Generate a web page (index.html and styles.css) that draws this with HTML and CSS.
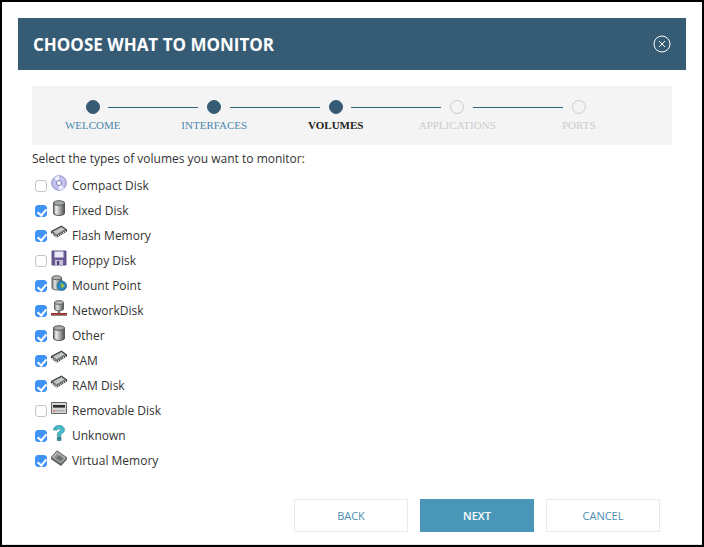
FILE: index.html
```html
<!DOCTYPE html>
<html lang="en">
<head>
<meta charset="utf-8">
<title>Choose what to monitor</title>
<link rel="stylesheet" href="styles.css">
</head>
<body>
<svg class="defs" width="0" height="0" aria-hidden="true">
  <defs>
    <linearGradient id="can" x1="0" x2="1" y1="0" y2="0"><stop offset="0" stop-color="#77797a"/><stop offset=".3" stop-color="#e2e3e3"/><stop offset=".65" stop-color="#9a9c9c"/><stop offset="1" stop-color="#4c4e4e"/></linearGradient>
    <symbol id="i-cd" viewBox="0 0 16 16"><circle cx="8" cy="8" r="7.300" fill="#c3c2ee" stroke="#8585c2" stroke-width=".9"/><path d="M8 8 3 2.800A7 7 0 0 1 8 1z" fill="#f0f0fd"/><path d="M8 8l5 5.200A7 7 0 0 1 8 15z" fill="#f0f0fd"/><circle cx="8" cy="8" r="2.500" fill="#fff" stroke="#6f6fb0" stroke-width=".9"/></symbol>
    <symbol id="i-can" viewBox="0 0 16 16"><path d="M2.500 3v10.300c0 1.300 2.500 2.200 5.500 2.200s5.500-.9 5.500-2.200V3z" fill="url(#can)" stroke="#4d4f4f" stroke-width=".9"/><ellipse cx="8" cy="3" rx="5.500" ry="2.300" fill="#a8aaaa" stroke="#4d4f4f" stroke-width=".9"/><path d="M5 6v7.500" stroke="#f2f2f2" stroke-width="1"/></symbol>
    <symbol id="i-chip" viewBox="0 0 16 16"><path d="M0 6.500 10.500 1 16 5l-10.500 6.500z" fill="#7d7f7f" stroke="#232525" stroke-width=".9"/><path d="M2.500 6.500l8-4.200 3 2.200-8 4.700z" fill="#c4c6c6"/><path d="M0 6.500V8l5.500 5L16 6.500V5L5.500 11.500z" fill="#303232"/><path d="M1 8.200l4.500 4L15.500 6" fill="none" stroke="#fff" stroke-width="1.500" stroke-dasharray="1 1"/></symbol>
    <symbol id="i-floppy" viewBox="0 0 16 16"><path d="M1 1h14v14H1z" fill="#6a5a96" stroke="#52457c" stroke-width=".9"/><path d="M3.500 1.500h9v6h-9z" fill="#ece9f6"/><path d="M4 10h8v5H4z" fill="#c2bed4"/><path d="M6 11h2.200v4H6z" fill="#52457c"/></symbol>
    <symbol id="i-mount" viewBox="0 0 16 16"><path d="M1 2.700v10.300c0 1.200 2 2 4.800 2s4.800-.8 4.800-2V2.700z" fill="url(#can)" stroke="#55595c" stroke-width=".9"/><ellipse cx="5.800" cy="2.700" rx="4.800" ry="2" fill="#b4b6b8" stroke="#55595c" stroke-width=".9"/><circle cx="10.800" cy="10.800" r="4.800" fill="#2c86bf" stroke="#1c648f" stroke-width=".7"/><path d="M9.500 7.800l4.500 2.500-3.300 3.400z" fill="#9cc43a"/></symbol>
    <symbol id="i-net" viewBox="0 0 16 16"><path d="M3.500 2.500v6.500c0 1 2 1.700 4.500 1.700s4.500-.7 4.500-1.700V2.500z" fill="url(#can)" stroke="#55595c" stroke-width=".9"/><ellipse cx="8" cy="2.500" rx="4.500" ry="1.900" fill="#b8baba" stroke="#55595c" stroke-width=".9"/><path d="M6.800 10.500h2.400v3H6.800z" fill="#6b6d6d"/><path d="M0 13h16v1.900H0z" fill="#a02f2a"/><path d="M0 14.900h16v.8H0z" fill="#5a5c5c"/></symbol>
    <symbol id="i-rem" viewBox="0 0 16 16"><path d="M.5 2.500h15v11H.5z" fill="#d6d7d7" stroke="#626363"/><path d="M2 5h12v2.600H2z" fill="#2a2b2b"/><path d="M2 10.500h2.500v1H2z" fill="#c8362e"/><path d="M5 10.800h9" stroke="#9a9b9b"/></symbol>
    <symbol id="i-unk" viewBox="0 0 16 16"><path d="M2.500 5C2.500 2 5 .5 8 .5s5.500 1.500 5.500 4.200c0 2.100-1.300 3-2.500 3.800-.8.500-1 .9-1 2H6.300c0-2.100.5-3.100 1.800-4 .9-.6 1.300-1 1.300-1.700 0-.7-.5-1.100-1.400-1.100-1 0-1.500.6-1.500 1.300z" fill="#45bccb" stroke="#1f7f8c" stroke-width=".6"/><path d="M6.300 11.700H10v3.800H6.300z" fill="#2a8e9b" stroke="#1f6f7a" stroke-width=".6"/></symbol>
    <symbol id="i-virt" viewBox="0 0 16 16"><path d="M0 7.500 6 .8l10 7-6 6.200z" fill="#a2a4a4" stroke="#4d4f4f" stroke-width=".8"/><path d="M0 7.500v1.800L10 16l6-6.400V7.800L10 14z" fill="#5f6161"/><path d="M3.500 7.500 6.500 4.300l6 4.100-3 3.100z" fill="#6f7171"/><path d="M2 7 6 2.800M4 8.500 8 4.300" stroke="#dcdede" stroke-width=".6"/></symbol>
  </defs>
</svg>
<div class="page">
  <header class="title-bar">
    <h1>CHOOSE WHAT TO MONITOR</h1>
    <svg class="close" viewBox="0 0 18 18" aria-label="Close"><circle cx="9" cy="9" r="8" fill="none" stroke="#fff" stroke-width="1"/><path d="M6 6l6 6M12 6l-6 6" stroke="#fff" stroke-width="1" fill="none"/></svg>
  </header>
  <main class="content">
    <section class="stepper">
      <div class="track">
        <span class="dot done"></span><span class="line"></span>
        <span class="dot done"></span><span class="line"></span>
        <span class="dot done"></span><span class="line"></span>
        <span class="dot"></span><span class="line"></span>
        <span class="dot"></span>
      </div>
      <div class="labels">
        <span class="done-label">WELCOME</span>
        <span class="done-label">INTERFACES</span>
        <span class="current-label">VOLUMES</span>
        <span>APPLICATIONS</span>
        <span>PORTS</span>
      </div>
    </section>
    <p class="prompt">Select the types of volumes you want to monitor:</p>
    <ul class="volumes">
      <li><span class="box"></span><svg class="ico"><use href="#i-cd"/></svg>Compact Disk</li>
      <li><span class="box on"></span><svg class="ico"><use href="#i-can"/></svg>Fixed Disk</li>
      <li><span class="box on"></span><svg class="ico"><use href="#i-chip"/></svg>Flash Memory</li>
      <li><span class="box"></span><svg class="ico"><use href="#i-floppy"/></svg>Floppy Disk</li>
      <li><span class="box on"></span><svg class="ico"><use href="#i-mount"/></svg>Mount Point</li>
      <li><span class="box on"></span><svg class="ico"><use href="#i-net"/></svg>NetworkDisk</li>
      <li><span class="box on"></span><svg class="ico"><use href="#i-can"/></svg>Other</li>
      <li><span class="box on"></span><svg class="ico"><use href="#i-chip"/></svg>RAM</li>
      <li><span class="box on"></span><svg class="ico"><use href="#i-chip"/></svg>RAM Disk</li>
      <li><span class="box"></span><svg class="ico"><use href="#i-rem"/></svg>Removable Disk</li>
      <li><span class="box on"></span><svg class="ico"><use href="#i-unk"/></svg>Unknown</li>
      <li><span class="box on"></span><svg class="ico"><use href="#i-virt"/></svg>Virtual Memory</li>
    </ul>
    <div class="actions">
      <button class="btn">BACK</button>
      <button class="btn primary">NEXT</button>
      <button class="btn">CANCEL</button>
    </div>
  </main>
</div>
</body>
</html>
```
FILE: styles.css
```css
* { box-sizing: border-box; }
html, body { margin: 0; height: 100%; }
body { background: #000; padding: 2px; font-family: "Open Sans", sans-serif; overflow: hidden; }
.defs { position: absolute; }
.page { background: #fff; height: 543px; padding: 16px 16px 0; display: flex; flex-direction: column; border-bottom: 1px solid #e4e4e4; }
.title-bar { flex: none; height: 52px; background: #365c75; display: flex; align-items: center; justify-content: space-between; padding: 0 15px; color: #fff; }
.title-bar h1 { margin: 0; font-size: 17px; font-weight: 700; line-height: 1; }
.close { width: 18px; height: 18px; }
.content { padding: 16px 14px 0; flex: 1; display: flex; flex-direction: column; }
.stepper { flex: none; height: 59px; background: #f4f4f4; padding-top: 14px; }
.track { display: flex; align-items: center; padding-left: 53.700px; height: 14px; }
.dot { width: 14px; height: 14px; border-radius: 50%; border: 1px solid #ccc; flex: none; }
.dot.done { background: #365c75; border-color: #365c75; }
.line { width: 90px; height: 1px; background: #2f627f; margin: 0 8.750px; flex: none; }
.labels { display: grid; grid-template-columns: repeat(5, 121.500px); margin-top: 5px; font-family: "Liberation Serif", serif; font-size: 11px; line-height: 13px; color: #ccc; text-align: center; }
.done-label { color: #4a87ad; }
.current-label { color: #222; font-weight: 700; }
.prompt { margin: 6px 0 0; font-size: 12px; line-height: 16px; color: #333; }
.volumes { list-style: none; margin: 6px 0 0; padding: 0; }
.volumes li { height: 25px; display: flex; align-items: center; font-size: 12px; color: #333; }
.box { width: 12px; height: 12px; border: 1px solid #c4c4c4; border-radius: 3px; background: #fff; flex: none; margin: 0 4px 0 3px; position: relative; }
.box.on { background: #3f93f7; border-color: #3f93f7; }
.box.on::after { content: ""; position: absolute; left: 3px; top: 1px; width: 4px; height: 7px; border: solid #fff; border-width: 0 2px 2px 0; transform: rotate(40deg); }
.ico { width: 16px; height: 16px; flex: none; margin-right: 5px; margin-top: -5px; }
.actions { display: flex; justify-content: flex-end; gap: 12px; margin-top: 26px; padding-right: 12px; }
.btn { width: 114px; height: 33px; border: 1px solid #e9e9e9; background: #fff; color: #4a8db2; font-family: "Open Sans", sans-serif; font-size: 11px; padding: 0; }
.btn.primary { background: #4a96b8; border-color: #4a96b8; color: #fff; font-weight: 600; }
```
